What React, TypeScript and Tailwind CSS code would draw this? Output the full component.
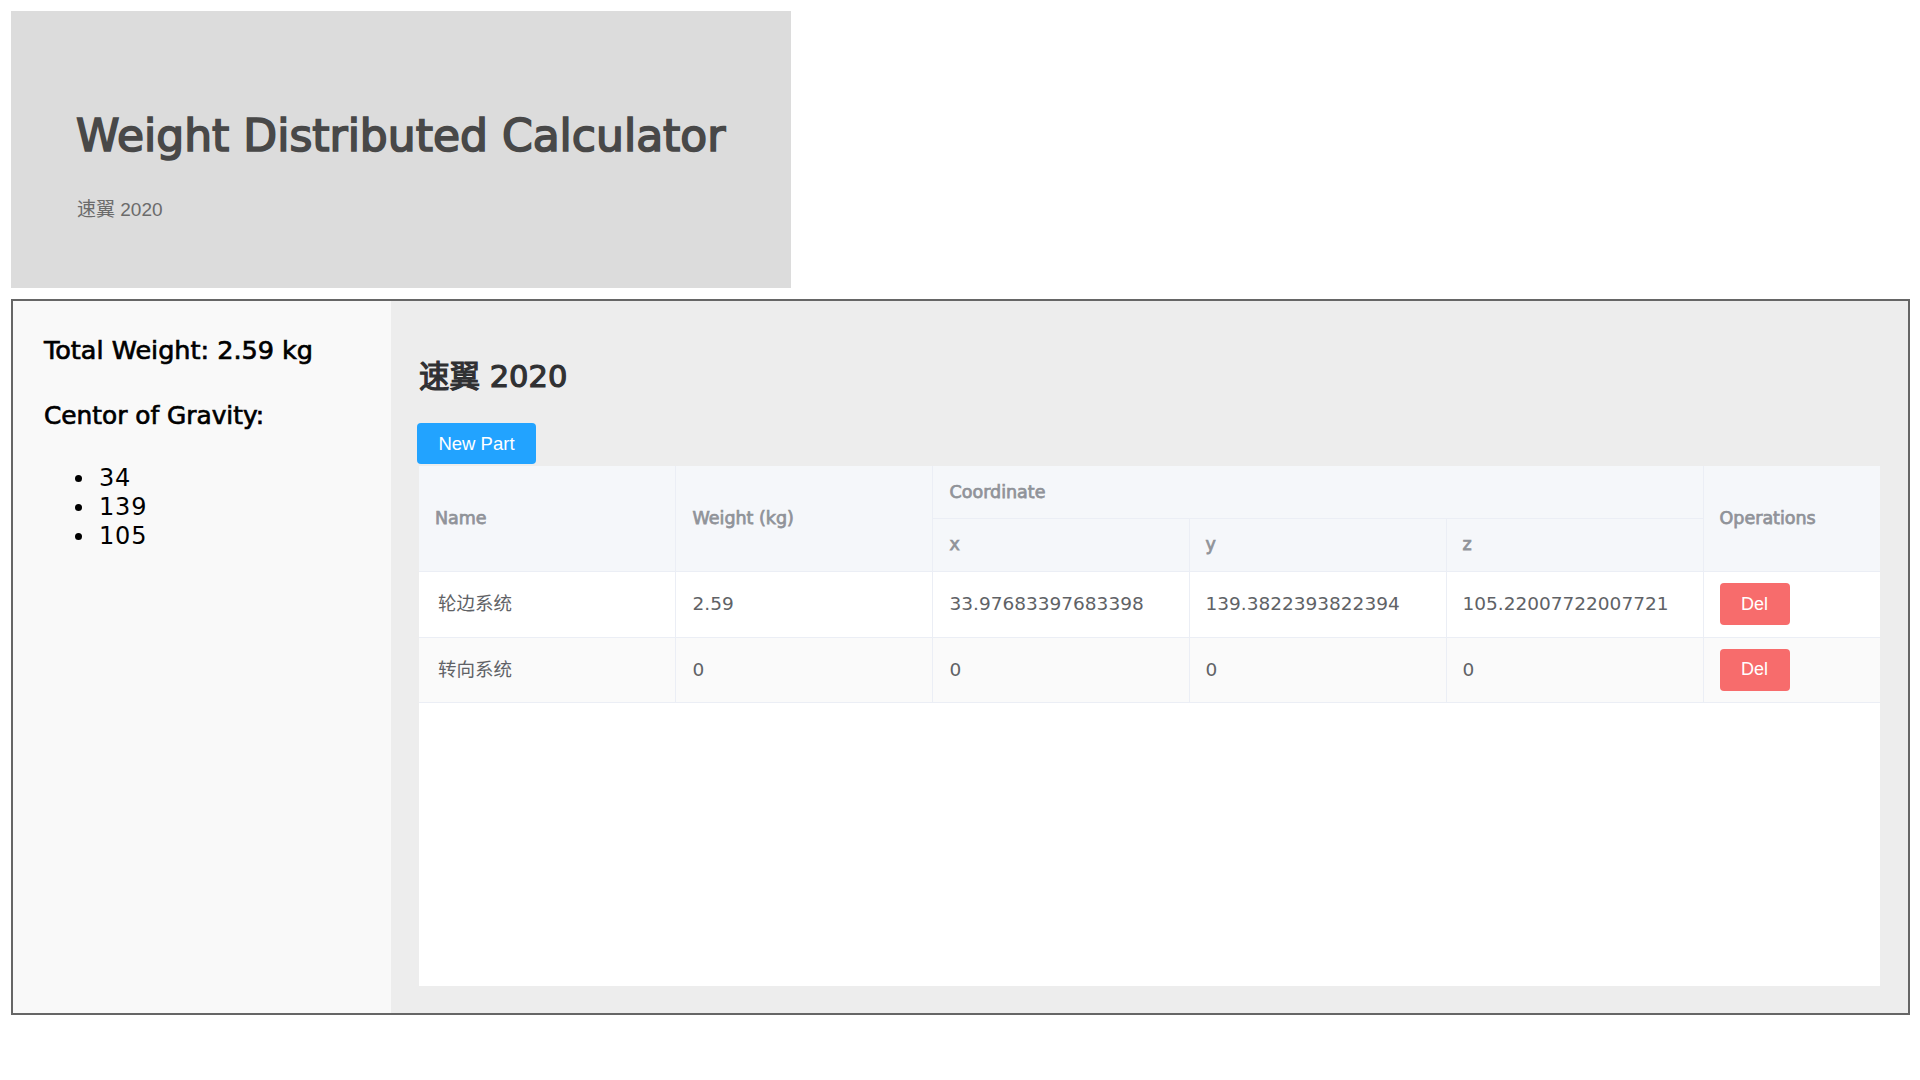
const parts = [
  { name: "轮边系统", weight: "2.59", x: "33.97683397683398", y: "139.3822393822394", z: "105.22007722007721" },
  { name: "转向系统", weight: "0", x: "0", y: "0", z: "0" },
];

const center = ["34", "139", "105"];

const dejavu = "font-['DejaVu_Sans','Noto_Sans_CJK_SC',sans-serif]";

export default function App() {
  return (
    <div className="min-h-screen bg-white p-[11px]">
      <div className="w-[780px] h-[277px] bg-[#dcdcdc] pt-[99px] pl-[65px]">
        <h1
          className={`${dejavu} text-[44px] leading-[52px] text-[#484848] [-webkit-text-stroke:1.7px_#484848]`}
        >
          Weight Distributed Calculator
        </h1>
        <p className="mt-[36px] ml-[1px] font-['Liberation_Sans','Noto_Sans_CJK_SC',sans-serif] text-[19px] leading-[24px] text-[#6b6b6b]">
          速翼 2020
        </p>
      </div>

      <div className="mt-[11px] flex w-[1899px] h-[716px] border-2 border-[#666]">
        <aside className={`${dejavu} w-[378px] shrink-0 bg-[#f9f9f9] pt-[35px] pl-[31px] text-black`}>
          <h3 className="text-[25.5px] leading-[29px] [-webkit-text-stroke:0.7px_#000]">Total Weight: 2.59 kg</h3>
          <h3 className="mt-[36px] text-[24.8px] leading-[29px] [-webkit-text-stroke:0.7px_#000]">Centor of Gravity:</h3>
          <ul className="mt-[34px]">
            {center.map((c) => (
              <li key={c} className="flex items-center text-[24px] leading-[29px] tracking-[0.8px]">
                <span className="ml-[31px] mr-[17px] w-[7px] h-[7px] rounded-full bg-black" />
                {c}
              </li>
            ))}
          </ul>
        </aside>

        <main className="flex-1 bg-[#ededed] px-[28px] pt-[28px] pb-[27px] flex flex-col">
          <h2
            className={`${dejavu} mt-[30px] text-[30.5px] leading-[36px] text-[#303133] [-webkit-text-stroke:1.2px_#303133]`}
          >
            速翼 2020
          </h2>
          <div className="mt-[28px]">
            <button className="-ml-[2px] h-[41px] w-[119px] rounded-[4px] bg-[#22a3ff] font-['Liberation_Sans',sans-serif] text-[18.5px] text-white">
              New Part
            </button>
          </div>
          <div className="mt-[2px] flex-1 bg-white">
            <table className={`${dejavu} w-[1461px] table-fixed border-collapse text-left`}>
              <colgroup>
                <col className="w-[256px]" />
                <col className="w-[257px]" />
                <col className="w-[257px]" />
                <col className="w-[257px]" />
                <col className="w-[257px]" />
                <col className="w-[177px]" />
              </colgroup>
              <thead className="bg-[#f5f7fa] text-[17.5px] text-[#909399] [-webkit-text-stroke:0.75px_#909399]">
                <tr className="h-[52px]">
                  <th rowSpan={2} className="pl-[16px] font-normal border-r border-b border-[#ebeef5]">Name</th>
                  <th rowSpan={2} className="pl-[17px] font-normal border-r border-b border-[#ebeef5]">Weight (kg)</th>
                  <th colSpan={3} className="pl-[17px] font-normal border-r border-b border-[#ebeef5]">Coordinate</th>
                  <th rowSpan={2} className="pl-[16px] font-normal border-b border-[#ebeef5]">Operations</th>
                </tr>
                <tr className="h-[53px]">
                  <th className="pl-[17px] font-normal border-r border-b border-[#ebeef5]">x</th>
                  <th className="pl-[16px] font-normal border-r border-b border-[#ebeef5]">y</th>
                  <th className="pl-[16px] font-normal border-r border-b border-[#ebeef5]">z</th>
                </tr>
              </thead>
              <tbody className="text-[18.5px] text-[#606266]">
                {parts.map((p, i) => (
                  <tr key={p.name} className={i % 2 === 1 ? "h-[65px] bg-[#fafafa]" : "h-[66px] bg-white"}>
                    <td className="pl-[19px] border-r border-b border-[#ebeef5]">{p.name}</td>
                    <td className="pl-[17px] border-r border-b border-[#ebeef5]">{p.weight}</td>
                    <td className="pl-[17px] border-r border-b border-[#ebeef5]">{p.x}</td>
                    <td className="pl-[16px] border-r border-b border-[#ebeef5]">{p.y}</td>
                    <td className="pl-[16px] border-r border-b border-[#ebeef5]">{p.z}</td>
                    <td className="pl-[16px] border-b border-[#ebeef5]">
                      <button className="h-[42px] w-[70px] rounded-[4px] bg-[#f76c6c] font-['Liberation_Sans',sans-serif] text-[18px] text-white">
                        Del
                      </button>
                    </td>
                  </tr>
                ))}
              </tbody>
            </table>
          </div>
        </main>
      </div>
    </div>
  );
}
